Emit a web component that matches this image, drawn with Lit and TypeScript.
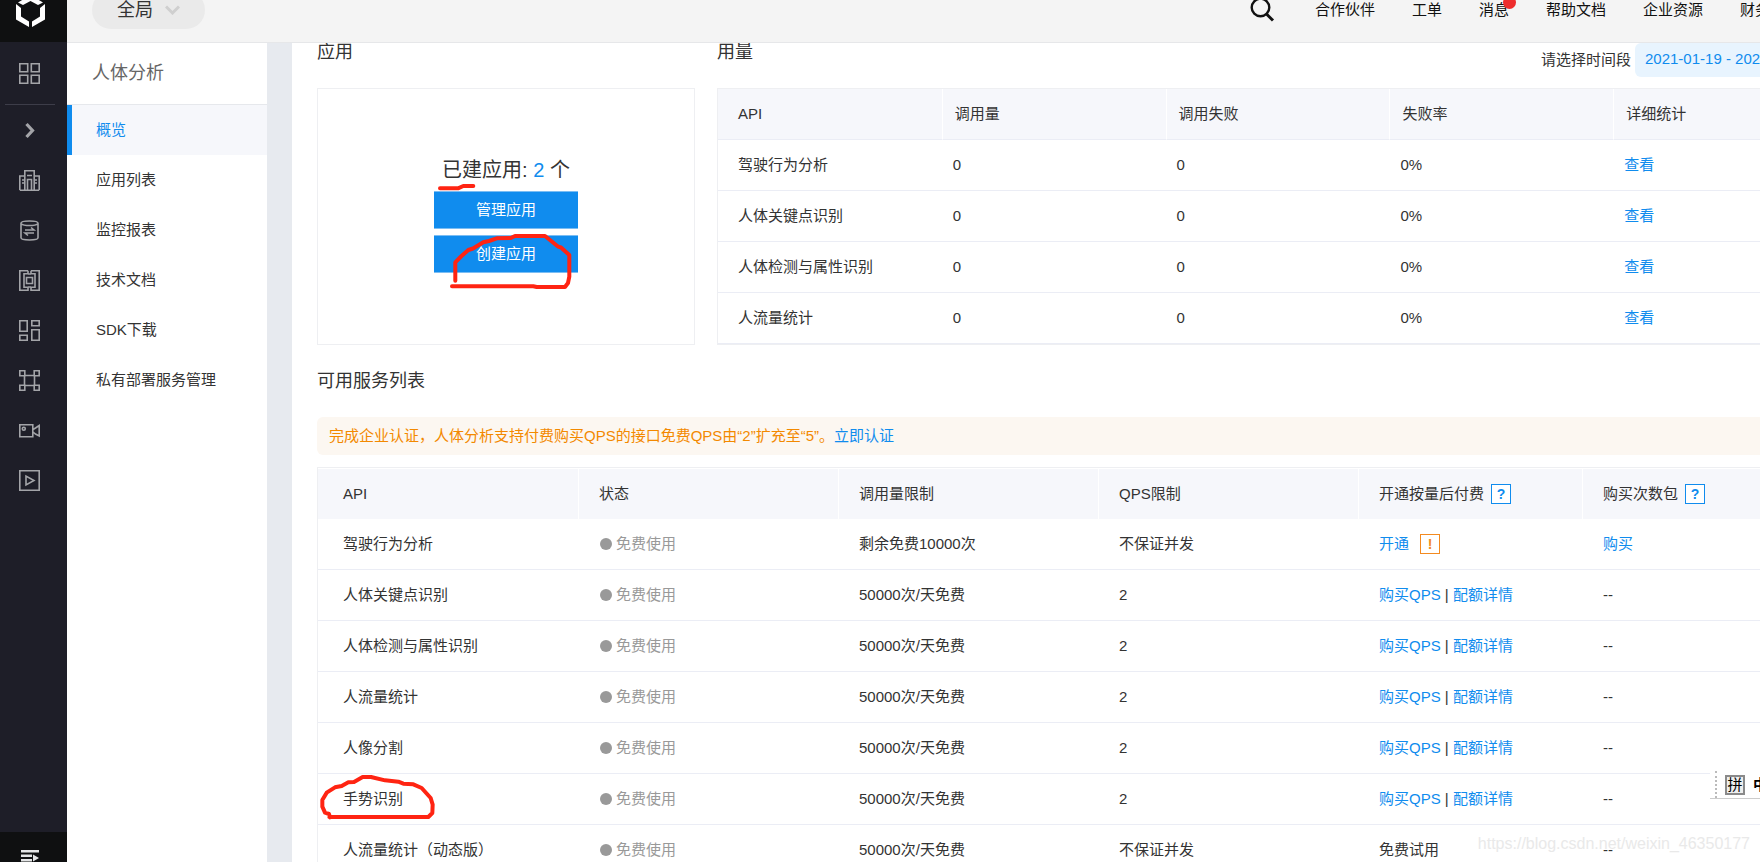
import { LitElement, html, css, svg, nothing, type TemplateResult } from "lit";
import { customElement } from "lit/decorators.js";
import { classMap } from "lit/directives/class-map.js";

const railIcons: { name: string; body: TemplateResult }[] = [
  { name: "展开", body: svg`<path d="M7.500 4 13.500 10.500 7.500 17" stroke-width="3.200"/>` },
  {
    name: "企业",
    body: svg`<path d="M5.800 20V.8h9.400V20M.8 20V6h5M20.200 20V6h-5M.8 20.200h19.400M8.500 20V9.500h4V20M8 5.500h5M3 10h2.500M3 13h2.500M15.500 10H18M15.500 13H18"/>`,
  },
  {
    name: "数据库",
    body: svg`<path d="M2 3.200v14.600c0 3 17 3 17 0V3.200c0-3-17-3-17 0ZM2.500 4c2 2 14 2 16 0"/><path d="M6 10h9l-3-2.500M15 13H6l3 2.500"/>`,
  },
  {
    name: "芯片",
    body: svg`<path d="M9 .8H.8v19.400H9v-3M9 .8v3H5v13.400h4M12 .8h8.200v19.400H12v-3M12 .8v3h4v13.400h-4M9 4h3M9 17h3"/><path d="M7.500 7.500h6v6h-6z"/>`,
  },
  {
    name: "面板",
    body: svg`<path d="M.8.8h7.400v10.400H.8zM12.800.8h7.400v4.900h-7.400zM.8 15.300h7.400v4.900H.8zM12.800 9.800h7.400v10.400h-7.400z"/>`,
  },
  {
    name: "网络",
    body: svg`<path d="M.8.8h5v5h-5zM15.200.8h5v5h-5zM.8 15.200h5v5h-5zM15.200 15.200h5v5h-5zM5.500 5.500v10M15.500 5.500v10M5.500 5.500h10M5.500 15.500h10"/>`,
  },
  {
    name: "摄像",
    body: svg`<path d="M.8 4.800h13v12H.8zM14 9.500l2.500-1.500 3.700-2.500v10.500l-3.700-2L14 12"/><circle cx="4.800" cy="8.800" r="1.500"/>`,
  },
  { name: "播放", body: svg`<path d="M.8.8h19.400v19.400H.8z"/><path d="M7 6v9l8-4.500z"/>` },
];

const menu = ["概览", "应用列表", "监控报表", "技术文档", "SDK下载", "私有部署服务管理"];
const nav = ["合作伙伴", "工单", "消息", "帮助文档", "企业资源", "财务"];
const usage = ["驾驶行为分析", "人体关键点识别", "人体检测与属性识别", "人流量统计"];

type Service = { name: string; quota: string; qps: string; pay: "open" | "qps" | "trial"; marked?: boolean };
const daily = (name: string, marked = false): Service => ({
  name,
  quota: "50000次/天免费",
  qps: "2",
  pay: "qps",
  marked,
});
const services: Service[] = [
  { name: "驾驶行为分析", quota: "剩余免费10000次", qps: "不保证并发", pay: "open" },
  daily("人体关键点识别"),
  daily("人体检测与属性识别"),
  daily("人流量统计"),
  daily("人像分割"),
  daily("手势识别", true),
  { name: "人流量统计（动态版）", quota: "50000次/天免费", qps: "不保证并发", pay: "trial" },
];

const base = css`
  * {
    box-sizing: border-box;
  }
  a {
    color: #108cee;
    text-decoration: none;
  }
  h1,
  h2,
  p {
    margin: 0;
    padding: 0;
    font-weight: inherit;
  }
  button,
  input {
    font: inherit;
    border: 0;
    padding: 0;
    margin: 0;
    background: none;
  }
  svg {
    display: block;
  }
`;

const tables = css`
  table {
    width: 100%;
    table-layout: fixed;
    border-collapse: separate;
    border-spacing: 0;
    border: 1px solid #eeeff2;
  }
  th,
  td {
    height: 51px;
    padding: 0;
    text-align: left;
    font-weight: inherit;
    white-space: nowrap;
    border-bottom: 1px solid #ebedf5;
  }
  th {
    background: #f6f7fb;
  }
  th + th {
    border-left: 1px solid #fff;
  }
`;

@customElement("icon-rail")
class IconRail extends LitElement {
  static styles = [
    base,
    css`
      :host {
        display: flex;
        flex-direction: column;
        background: #1e1e28;
        color: #a3a4a8;
      }
      .logo {
        height: 42px;
        background: #0f1011;
        flex: none;
      }
      .item {
        width: 100%;
        height: 50px;
        padding-right: 8px;
        display: flex;
        align-items: center;
        justify-content: center;
        color: inherit;
      }
      .first {
        height: 62px;
      }
      .rule {
        height: 1px;
        margin: 0 12px 0 5px;
        background: #3d3d49;
      }
      .bottom {
        margin-top: auto;
        height: 30px;
        flex: none;
        overflow: hidden;
        background: #0f1011;
        display: flex;
        padding: 18px 0 0 21px;
      }
      .line {
        fill: none;
        stroke: currentColor;
        stroke-width: 1.6;
      }
    `,
  ];
  icon(body: TemplateResult) {
    return html`<svg class="line" width="21" height="21" viewBox="0 0 21 21" aria-hidden="true">${body}</svg>`;
  }
  render() {
    return html`
      <div class="logo">
        <svg width="67" height="42" viewBox="0 0 67 42" fill="#fff" aria-hidden="true">
          <path d="M16 4l5 4v8.500l8 5V27l-13-7.500zM45 4l-5 4v8.500l-8 5V27l13-7.500zM18 2.500 30.500-5 43 2.500 38 5l-7.500-4L23 5z" />
        </svg>
      </div>
      <button class="item first" aria-label="总览">
        ${this.icon(svg`<path d="M.8.8h7.900v7.900H.8zM12.300.8h7.900v7.900h-7.900zM.8 12.300h7.900v7.900H.8zM12.300 12.300h7.900v7.900h-7.900z"/>`)}
      </button>
      <div class="rule"></div>
      ${railIcons.map((i) => html`<button class="item" aria-label=${i.name}>${this.icon(i.body)}</button>`)}
      <button class="bottom" aria-label="菜单">
        <svg width="18" height="18" viewBox="0 0 18 18" fill="#e4e5e6" aria-hidden="true">
          <path d="M0 0h18v2.500H0zM0 4.500h11v2.500H0zM0 9h11v2.500H0zM0 13.500h18V16H0zM12 4.500l6 3.500-6 3.500z" />
        </svg>
      </button>
    `;
  }
}

@customElement("top-bar")
class TopBar extends LitElement {
  static styles = [
    base,
    css`
      :host {
        display: flex;
        align-items: flex-end;
        height: 43px;
        overflow: hidden;
        background: #f4f4f4;
        border-bottom: 1px solid #e6e7e9;
      }
      .bar {
        flex: 1;
        height: 64px;
        flex-shrink: 0;
        display: flex;
        align-items: center;
        justify-content: space-between;
        padding-left: 25px;
        margin-right: -10px;
      }
      .scope {
        height: 38px;
        width: 113px;
        padding: 0 25px;
        display: flex;
        align-items: center;
        justify-content: space-between;
        border-radius: 19px;
        background: #eaeaea;
        color: #333;
        font-size: 18px;
        line-height: 24px;
      }
      .links {
        display: flex;
        align-items: center;
        gap: 37px;
      }
      .search {
        margin-right: 3px;
      }
      .links a {
        color: #111;
        position: relative;
        white-space: nowrap;
      }
      .dot {
        position: absolute;
        right: -7px;
        top: -4px;
        width: 13px;
        height: 13px;
        border-radius: 50%;
        background: #ee2d2d;
      }
    `,
  ];
  render() {
    return html`<div class="bar">
      <button class="scope">
        全局
        <svg width="15" height="10" viewBox="0 0 15 10" fill="none" stroke="#cfcfcf" stroke-width="3" aria-hidden="true">
          <path d="M1 1.500 7.500 8 14 1.500" />
        </svg>
      </button>
      <nav class="links">
        <button class="search" aria-label="搜索">
          <svg width="26" height="26" viewBox="0 0 26 26" fill="none" stroke="#111" stroke-width="2.400" aria-hidden="true">
            <circle cx="11.500" cy="10.500" r="8.800" />
            <path d="M17.500 17 24 23.500" stroke-width="3" />
          </svg>
        </button>
        ${nav.map((n) => html`<a href="#">${n}${n === "消息" ? html`<span class="dot"></span>` : nothing}</a>`)}
      </nav>
    </div>`;
  }
}

@customElement("side-menu")
class SideMenu extends LitElement {
  static styles = [
    base,
    css`
      :host {
        display: block;
        background: #fff;
      }
      h1 {
        height: 62px;
        padding-left: 25px;
        border-bottom: 1px solid #e6e8ec;
        color: #666;
        font-size: 18px;
        line-height: 61px;
      }
      a {
        display: block;
        border-left: 5px solid transparent;
        padding-left: 24px;
        line-height: 50px;
        color: #333;
      }
      .on {
        border-left-color: #108cee;
        background: #f6f7fb;
        color: #108cee;
      }
    `,
  ];
  render() {
    return html`<h1>人体分析</h1>
      <nav>${menu.map((m, i) => html`<a href="#" class=${classMap({ on: i === 0 })}>${m}</a>`)}</nav>`;
  }
}

@customElement("app-card")
class AppCard extends LitElement {
  static styles = [
    base,
    css`
      :host {
        display: flex;
        flex-direction: column;
      }
      h2 {
        height: 45px;
        font-size: 18px;
        line-height: 18px;
      }
      .card {
        flex: 1;
        position: relative;
        display: flex;
        flex-direction: column;
        align-items: center;
        justify-content: center;
        gap: 6px;
        padding-bottom: 5px;
        border: 1px solid #eeeff2;
      }
      p {
        font-size: 20px;
        line-height: 30px;
      }
      .count {
        color: #108cee;
      }
      .card button {
        width: 144px;
        height: 38px;
        background: #108cee;
        border: solid #7bbdf3;
        border-width: 1px 0;
        color: #fff;
      }
      .ink {
        position: absolute;
        left: 0;
        top: 0;
        pointer-events: none;
        fill: none;
        stroke: #ff2412;
        stroke-width: 4;
        stroke-linecap: round;
        stroke-linejoin: round;
      }
    `,
  ];
  render() {
    return html`<h2>应用</h2>
      <div class="card">
        <p>已建应用: <span class="count">2</span> 个</p>
        <button>管理应用</button>
        <button>创建应用</button>
        <svg class="ink" width="376" height="255" viewBox="0 0 376 255" aria-hidden="true">
          <path d="M122 99.300H140l5.300-2.300h10" />
          <path
            d="M137.300 191.700V173.300L143 167.500 150.300 161 155 159.500 165.300 153.300 171 152 178.700 149.300 192.700 149 197 147H227L240.300 157.700 243 158.500 251.300 166V187.700L250 194 247 198H218.700L215.300 197.300H134"
          />
        </svg>
      </div>`;
  }
}

@customElement("usage-panel")
class UsagePanel extends LitElement {
  static styles = [
    base,
    tables,
    css`
      :host {
        display: block;
        min-width: 0;
      }
      .head {
        display: flex;
        justify-content: space-between;
        height: 34px;
        margin-bottom: 11px;
      }
      h2 {
        font-size: 18px;
        line-height: 18px;
      }
      .range {
        display: flex;
        align-items: center;
        gap: 4px;
        line-height: 34px;
      }
      .range input {
        width: 203px;
        height: 34px;
        padding: 0 10px 2px;
        border-radius: 6px;
        background: #e8f4fe;
        color: #108cee;
      }
      th {
        padding-left: 12px;
      }
      td {
        padding-left: 11px;
      }
      th:first-child,
      td:first-child {
        padding-left: 20px;
      }
    `,
  ];
  render() {
    return html`<div class="head">
        <h2>用量</h2>
        <div class="range">
          <label for="range">请选择时间段</label>
          <input id="range" type="text" readonly .value=${"2021-01-19 - 2021-01-19"} />
        </div>
      </div>
      <table>
        <thead>
          <tr>
            ${["API", "调用量", "调用失败", "失败率", "详细统计"].map((h) => html`<th>${h}</th>`)}
          </tr>
        </thead>
        <tbody>
          ${usage.map(
            (name) => html`<tr>
              <td>${name}</td>
              <td>0</td>
              <td>0</td>
              <td>0%</td>
              <td><a href="#">查看</a></td>
            </tr>`
          )}
        </tbody>
      </table>`;
  }
}

@customElement("service-list")
class ServiceList extends LitElement {
  static styles = [
    base,
    tables,
    css`
      :host {
        display: block;
      }
      h2 {
        margin: 27px 0;
        font-size: 18px;
        line-height: 18px;
      }
      .notice {
        height: 38px;
        margin-bottom: 12px;
        padding-left: 12px;
        border-radius: 6px;
        background: #fcf7f1;
        color: #f38900;
        line-height: 38px;
      }
      th {
        border-top: 1px solid #fff;
        border-bottom: 0;
      }
      th,
      td {
        padding-left: 20px;
      }
      td + td {
        padding-left: 21px;
      }
      th:first-child,
      td:first-child {
        padding-left: 25px;
      }
      td:first-child {
        position: relative;
      }
      .pay {
        width: 224px;
      }
      .pack {
        width: 255px;
      }
      .cell {
        display: flex;
        align-items: center;
      }
      .state {
        color: #999;
      }
      .bullet {
        width: 12px;
        height: 12px;
        margin: 0 4px 0 1px;
        border-radius: 50%;
        background: #999;
      }
      .help {
        gap: 7px;
      }
      .open {
        gap: 11px;
      }
      .tip {
        width: 20px;
        height: 20px;
        border: 1px solid #108cee;
        background: #fff;
        color: #108cee;
        font-size: 14px;
        font-weight: 700;
        line-height: 18px;
        text-align: center;
      }
      .warn {
        border-color: #f38a20;
        color: #f38a20;
      }
      .ink {
        position: absolute;
        left: 0;
        top: 0;
        overflow: visible;
        pointer-events: none;
        fill: none;
        stroke: #ff2412;
        stroke-width: 12;
        stroke-linecap: round;
        stroke-linejoin: round;
      }
    `,
  ];
  pay(s: Service) {
    if (s.pay === "open")
      return html`<div class="cell open"><a href="#">开通</a><button class="tip warn" aria-label="提示">!</button></div>`;
    if (s.pay === "qps") return html`<a href="#">购买QPS</a> | <a href="#">配额详情</a>`;
    return "免费试用";
  }
  render() {
    const tip = html`<button class="tip" aria-label="帮助">?</button>`;
    return html`<h2>可用服务列表</h2>
      <p class="notice">
        完成企业认证，人体分析支持付费购买QPS的接口免费QPS由“2”扩充至“5”。<a href="#">立即认证</a>
      </p>
      <table>
        <thead>
          <tr>
            <th>API</th>
            <th>状态</th>
            <th>调用量限制</th>
            <th>QPS限制</th>
            <th class="pay"><div class="cell help">开通按量后付费${tip}</div></th>
            <th class="pack"><div class="cell help">购买次数包${tip}</div></th>
          </tr>
        </thead>
        <tbody>
          ${services.map(
            (s) => html`<tr>
              <td>
                ${s.name}${s.marked
                  ? html`<svg class="ink" width="120" height="50" viewBox="0 0 360 150" aria-hidden="true">
                      <path
                        d="M36 130l-3-10-12-4-8-18v-20l13-22 25-16 20-4 20-11 17-1 26-15h25l42 10 40 4 15 6 30 2 25 11 27 30 6 20-1 25-12 12H34"
                      />
                    </svg>`
                  : nothing}
              </td>
              <td><div class="cell state"><span class="bullet"></span>免费使用</div></td>
              <td>${s.quota}</td>
              <td>${s.qps}</td>
              <td>${this.pay(s)}</td>
              <td>${s.pay === "open" ? html`<a href="#">购买</a>` : "--"}</td>
            </tr>`
          )}
        </tbody>
      </table>`;
  }
}

@customElement("app-root")
class AppRoot extends LitElement {
  static styles = [
    base,
    css`
      :host {
        position: relative;
        display: grid;
        grid-template-columns: 67px 200px minmax(0, 1fr);
        grid-template-rows: auto minmax(0, 1fr);
        height: 100vh;
        overflow: hidden;
        background: #fff;
        color: #333;
        font: 400 15px/20px "Liberation Sans", "Noto Sans CJK SC", sans-serif;
      }
      icon-rail {
        grid-row: 1 / 3;
      }
      top-bar {
        grid-column: 2 / 4;
      }
      main {
        overflow: hidden;
        border-left: 25px solid #e7eaef;
        padding-left: 25px;
      }
      .content {
        margin-right: -78px;
      }
      .overview {
        display: grid;
        grid-template-columns: 378px minmax(0, 1fr);
        gap: 22px;
      }
      .ime {
        position: absolute;
        right: 0;
        bottom: 63px;
        width: 50px;
        height: 28px;
        overflow: hidden;
        display: flex;
        align-items: center;
        background: #fff;
        border-bottom: 1px solid #ccc;
        color: #000;
        white-space: nowrap;
      }
      .grip {
        align-self: stretch;
        margin: 0 8px 0 5px;
        border-left: 2px dotted #bbb;
      }
      .mode {
        width: 20px;
        height: 20px;
        flex: none;
        margin-right: 8px;
        border: 2px solid #8a8a8a;
        background: #eee;
        line-height: 15px;
        text-align: center;
      }
      .lang {
        font-weight: 700;
      }
      .mark {
        position: absolute;
        right: 10px;
        bottom: 8px;
        color: #e9e9e9;
        font-size: 16px;
      }
    `,
  ];
  render() {
    return html`
      <icon-rail></icon-rail>
      <top-bar></top-bar>
      <side-menu></side-menu>
      <main>
        <div class="content">
          <div class="overview">
            <app-card></app-card>
            <usage-panel></usage-panel>
          </div>
          <service-list></service-list>
        </div>
      </main>
      <div class="ime"><span class="grip"></span><span class="mode">拼</span><span class="lang">中</span></div>
      <div class="mark">https://blog.csdn.net/weixin_46350177</div>
    `;
  }
}
